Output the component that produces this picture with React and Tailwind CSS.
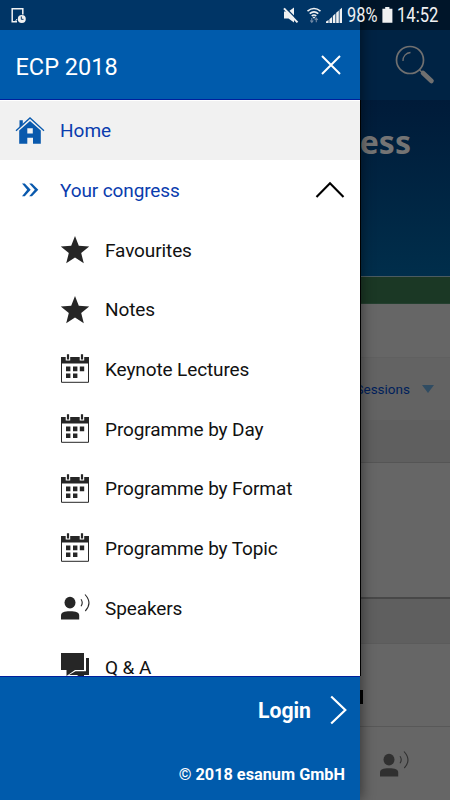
import React from 'react';

const menuItems = [
  { label: 'Favourites', icon: 'star' },
  { label: 'Notes', icon: 'star' },
  { label: 'Keynote Lectures', icon: 'calendar' },
  { label: 'Programme by Day', icon: 'calendar' },
  { label: 'Programme by Format', icon: 'calendar' },
  { label: 'Programme by Topic', icon: 'calendar' },
  { label: 'Speakers', icon: 'speaker' },
  { label: 'Q & A', icon: 'chat' },
];

const StarIcon = () => (
  <svg viewBox="0 0 30 30" className="w-[30px] h-[30px]" fill="#262626">
    <path d="M15 1 L18.8 10.7 L29.2 11.4 L21.2 18.1 L23.8 28.2 L15 22.6 L6.2 28.2 L8.8 18.1 L.8 11.4 L11.2 10.7 Z" />
  </svg>
);

const CalendarIcon = () => (
  <svg viewBox="0 0 30 30" className="w-[30px] h-[30px]">
    <path d="M1.5 4 H28.5 V28.3 H1.5 Z" fill="#fff" stroke="#262626" />
    <path d="M1 3 H29 V9.5 H1 Z" fill="#262626" />
    <path d="M5.7 0 H10.2 V6.6 H5.7 Z M19.7 0 H24.2 V6.6 H19.7 Z" fill="#fff" />
    <path d="M6.9 .3 H9.1 V5.4 H6.9 Z M20.9 .3 H23.1 V5.4 H20.9 Z" fill="#262626" />
    <path d="M6 12.6 h4.4 v4.6 H6 Z M13 12.6 h4.4 v4.6 H13 Z M19.8 12.6 H24.2 v4.6 h-4.4 Z M6 19.4 h4.4 v4.6 H6 Z M13 19.4 h4.4 v4.6 H13 Z" fill="#262626" />
  </svg>
);

const SpeakerIcon = ({ className = '' }) => (
  <svg viewBox="0 0 30 30" className={`w-[30px] h-[30px] ${className}`}>
    <ellipse cx="10" cy="9.6" rx="5.5" ry="5.8" fill="currentColor" />
    <path d="M1 26.4 V22.5 C1 19.5 4 18.2 10 18.2 C16 18.2 19.2 19.5 19.2 22.5 V26.4 Z" fill="currentColor" />
    <path d="M21 6.2 C22.6 8.5 22.6 11 21 13.3 M25 1.5 C30 7 30 13 25.3 18" fill="none" stroke="currentColor" strokeWidth="1.1" />
  </svg>
);

const ChatIcon = () => (
  <svg viewBox="0 0 30 30" className="w-[30px] h-[30px]" fill="#262626">
    <path d="M1 0 H24 V17 H15 L6.5 23 V17 H1 Z" />
    <path d="M26 5 H29 V22 H24 V27 L17 22 H9 L15.5 18.2 H26 Z" />
  </svg>
);

const HomeIcon = () => (
  <svg viewBox="0 0 30 30" className="w-[30px] h-[30px]">
    <path d="M4.5 4.3 H7.8 V8 L4.5 11.3 Z" fill="#0959ad" />
    <path d="M1 14.7 L15 2 L29 14.7" fill="none" stroke="#0959ad" strokeWidth="1.3" />
    <path fillRule="evenodd" d="M4.2 14.6 L15 5 L25.8 14.6 V27.8 H18 V21.8 H12.3 V27.8 H4.2 Z M12.3 12.2 V17.4 H17.8 V12.2 Z" fill="#0959ad" />
  </svg>
);

const icons = {
  star: <StarIcon />,
  calendar: <CalendarIcon />,
  speaker: <SpeakerIcon className="text-[#262626]" />,
  chat: <ChatIcon />,
};

const StatusBar = () => (
  <div className="absolute inset-x-0 top-0 z-20 flex h-[30px] items-center pl-[11px] text-[#f0f1f2]">
    <svg viewBox="0 0 16 18" className="w-4 h-[18px]">
      <path d="M6 15.7 H1.2 V2.7 H11.8 V8.5" fill="none" stroke="currentColor" strokeWidth="1.5" />
      <path d="M4 16 L6 13" stroke="currentColor" />
      <circle cx="10.8" cy="13" r="4" fill="currentColor" />
      <path d="M10.3 10.5 V13.3 H12.5" fill="none" stroke="#003566" />
    </svg>
    <svg viewBox="0 0 72 22" className="ml-[255px] w-[72px] h-[22px] shrink-0">
      <path d="M2 7.5 H6.5 L12 3.5 V18.5 L6.5 14.5 H2 Z" fill="currentColor" />
      <path d="M3 3.2 L17 17.6" stroke="#003566" strokeWidth="1.4" />
      <path d="M2 4.4 L15.5 18.4" stroke="currentColor" strokeWidth="2" />
      <path d="M25.5 7.2 Q32 1.8 38.5 7.2 M27.7 9.7 Q32 6 36.3 9.7 M29.7 12 Q32 10 34.3 12" fill="none" stroke="currentColor" strokeWidth="1.6" />
      <path d="M32 14.8 L30.3 12.8 H33.7 Z" fill="currentColor" />
      <path d="M29.8 14 V18 M28.3 16.5 L29.8 18.3 L31.3 16.5 M34.3 18.3 V14.5 M32.8 16 L34.3 14.2 L35.8 16" fill="none" stroke="#7189a5" strokeWidth="1.1" />
      <path d="M44 19 V17.4 L46.6 16 V19 Z M47.4 19 V15.2 L50 13 V19 Z M50.8 19 V12 L53.4 9.5 V19 Z M54.2 19 V8.8 L56.8 6.5 V19 Z M57.6 19 V5.7 L60 3.7 V19 Z" fill="currentColor" />
    </svg>
    <div className="-ml-[7px] mt-[2px] w-[33px] origin-left scale-x-[0.84] whitespace-nowrap text-[19.5px] leading-5">98%</div>
    <svg viewBox="0 0 11 18" className="ml-[2px] w-[11px] h-[18px] shrink-0">
      <path d="M3.2 1 H7.4 V2.8 H10.4 V16.8 H.4 V2.8 H3.2 Z" fill="currentColor" />
    </svg>
    <div className="ml-[4px] mt-[2px] w-[42px] origin-left scale-x-[0.85] whitespace-nowrap text-[19.5px] leading-5">14:52</div>
  </div>
);

const CongressPage = () => (
  <div className="flex h-full flex-col bg-[#666]">
    <div className="h-[30px] bg-[#001529]" />
    <div className="flex h-[70px] items-center justify-end bg-[#002344] pr-[14px]">
      <svg viewBox="0 0 42 42" className="w-[42px] h-[42px] text-[#707070]">
        <circle cx="16" cy="16" r="13.5" fill="none" stroke="currentColor" strokeWidth="1.7" />
        <path d="M9 17 A8 8 0 0 1 16.5 8.5" fill="none" stroke="currentColor" strokeWidth="1.3" />
        <path d="M25.5 26 L29 29" stroke="currentColor" strokeWidth="1.5" />
        <path d="M29 29 L37.5 37" stroke="currentColor" strokeWidth="4.6" strokeLinecap="round" />
      </svg>
    </div>
    <div className="h-[176px] bg-gradient-to-b from-[#001b39] to-[#002e4b] pr-[39px] pt-[20px] text-right font-['Noto_Sans'] text-[32px] font-bold leading-[44px] text-[#747474]">
      Congress
    </div>
    <div className="h-[28px] border-t border-[#4b5b60] border-b border-b-[#24402f] bg-[#1b3825]" />
    <div className="h-[54px] border-b border-[#606060]" />
    <div className="flex h-[62px] items-center justify-end gap-3 bg-[#636363] pr-[16px] text-[13.5px] text-[#001f5b]">
      All Sessions
      <div className="h-0 w-0 border-x-[6px] border-t-[8px] border-x-transparent border-t-[#304c62]" />
    </div>
    <div className="h-[43px] border-b border-[#555] bg-[#5f5f5f]" />
    <div className="h-[136px] border-b-2 border-[#484848]" />
    <div className="h-[45px] border-b border-[#5b5b5b] bg-[#5f5f5f]" />
    <div className="flex h-[83px] items-center justify-end border-b border-[#585858] pr-[87px] pt-[24px]">
      <div className="h-[14px] w-3 bg-black" />
    </div>
    <div className="flex h-[73px] items-center justify-end pr-[41px] pt-[2px]">
      <SpeakerIcon className="text-[#303030]" />
    </div>
  </div>
);

const Drawer = () => (
  <aside className="absolute left-0 top-0 z-10 flex h-full w-[360px] flex-col bg-white shadow-[2px_0_12px_rgba(0,0,0,0.45)]">
    <div className="h-[30px] shrink-0 bg-[#003566]" />
    <header className="flex h-[70px] shrink-0 items-center justify-between border-b border-[#00209c] bg-[#005bac] pl-[15.5px] pr-[19px] text-white">
      <h1 className="pt-[4px] text-[23.5px] leading-8">ECP 2018</h1>
      <svg viewBox="0 0 20 20" className="w-5 h-5">
        <path d="M1 1 L19 19 M19 1 L1 19" stroke="currentColor" strokeWidth="2" />
      </svg>
    </header>

    <nav className="min-h-0 flex-1 overflow-hidden pt-px text-[19px] tracking-[-0.11px] text-[#111] shadow-[1px_0_0_#000]">
      <div className="flex h-[59px] items-center bg-[#f1f1f1] pl-[15px] text-[#0a3cae]">
        <HomeIcon />
        <span className="ml-[15px] pt-[2px] tracking-normal">Home</span>
      </div>
      <div className="flex h-[60px] items-center pl-[15px] pr-[15px] text-[#0a3cae]">
        <svg viewBox="0 0 30 30" className="w-[30px] h-[30px]" fill="#0959ad">
          <path d="M7 8.5 H9.8 L15.7 14.8 L9.8 21.2 H7 L12.2 14.8 Z M14.2 8.5 H17 L23.3 14.8 L17 21.2 H14.2 L19.8 14.8 Z" />
        </svg>
        <span className="ml-[15px] flex-1 pt-[2px]">Your congress</span>
        <svg viewBox="0 0 30 18" className="w-[30px] h-[18px]">
          <path d="M1.5 16 L15 2.2 L28.5 16" fill="none" stroke="#000" strokeWidth="2.1" />
        </svg>
      </div>
      {menuItems.map((item) => (
        <div key={item.label} className="flex h-[59.7px] items-center pl-[60px]">
          {icons[item.icon]}
          <span className="ml-[15px] pt-[2px]">{item.label}</span>
        </div>
      ))}
    </nav>

    <footer className="flex h-[124px] shrink-0 flex-col items-end border-t border-[#00209c] bg-[#005bac] text-white">
      <div className="flex items-center gap-[18px] pr-[13px] pt-[16px] text-[21.2px] font-bold leading-8">
        <span className="pt-[2px]">Login</span>
        <svg viewBox="0 0 18 30" className="w-[18px] h-[30px]">
          <path d="M2.2 1.5 L16.3 15 L2.2 28.5" fill="none" stroke="currentColor" strokeWidth="2.2" />
        </svg>
      </div>
      <p className="mt-[36px] pr-[15px] text-[16.3px] font-bold leading-6">© 2018 esanum GmbH</p>
    </footer>
  </aside>
);

const App = () => {
  return (
    <div className="relative h-[800px] w-[450px] overflow-hidden font-['Roboto',sans-serif]">
      <CongressPage />
      <Drawer />
      <StatusBar />
    </div>
  );
};

export default App;
